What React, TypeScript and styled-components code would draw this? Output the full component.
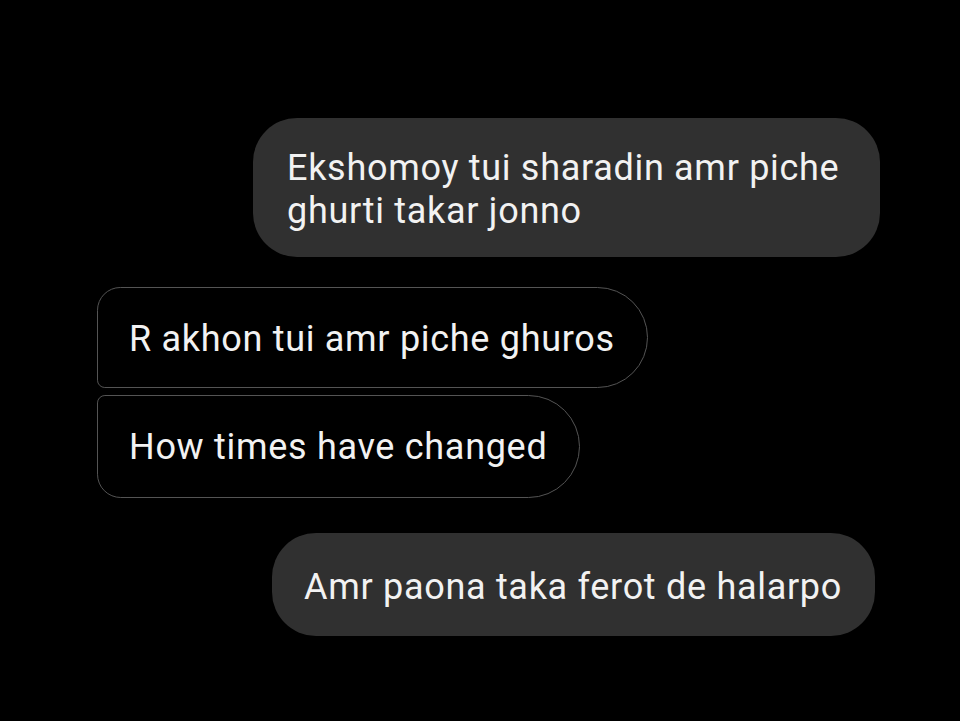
import React from "react";
import styled, { createGlobalStyle, css } from "styled-components";

const Global = createGlobalStyle`
  html, body { margin: 0; padding: 0; background: #000; }
  body { font-family: Roboto, "Noto Sans", Arial, sans-serif; }
`;

const Screen = styled.div`
  width: 960px;
  height: 721px;
  background: #000;
  display: flex;
  flex-direction: column;
  padding-top: 118px;
  box-sizing: border-box;
  overflow: hidden;
`;

const Row = styled.div<{ $side: "left" | "right"; $gap: number; $inset: number }>`
  display: flex;
  justify-content: ${(p) => (p.$side === "right" ? "flex-end" : "flex-start")};
  margin-top: ${(p) => p.$gap}px;
  ${(p) =>
    p.$side === "right"
      ? css`padding-right: ${p.$inset}px;`
      : css`padding-left: ${p.$inset}px;`}
`;

const bubbleText = css`
  color: #f2f2f2;
  font-size: 36px;
  letter-spacing: 0.7px;
  line-height: 43px;
  white-space: nowrap;
`;

const Sent = styled.div<{
  $width?: number;
  $padTop: number;
  $padBottom: number;
  $padLeft: number;
}>`
  ${bubbleText}
  background: #303030;
  border-radius: 44px;
  padding: ${(p) => p.$padTop}px 33px ${(p) => p.$padBottom}px ${(p) => p.$padLeft}px;
  box-sizing: border-box;
  ${(p) => p.$width && css`width: ${p.$width}px; white-space: normal;`}
`;

const Received = styled.div<{ $first?: boolean }>`
  ${bubbleText}
  background: #000;
  border: 1.5px solid #545454;
  border-radius: ${(p) => (p.$first ? "24px 52px 52px 8px" : "8px 52px 52px 24px")};
  padding: 30px 32px ${(p) => (p.$first ? 26 : 28)}px 31px;
`;

export default function App() {
  return (
    <>
      <Global />
      <Screen>
        <Row $side="right" $gap={0} $inset={80}>
          <Sent $width={627} $padTop={29} $padBottom={24} $padLeft={34}>
            Ekshomoy tui sharadin amr piche ghurti takar jonno
          </Sent>
        </Row>
        <Row $side="left" $gap={30} $inset={97}>
          <Received $first>R akhon tui amr piche ghuros</Received>
        </Row>
        <Row $side="left" $gap={7} $inset={97}>
          <Received>How times have changed</Received>
        </Row>
        <Row $side="right" $gap={35} $inset={85}>
          <Sent $padTop={33} $padBottom={27} $padLeft={32}>
            Amr paona taka ferot de halarpo
          </Sent>
        </Row>
      </Screen>
    </>
  );
}
